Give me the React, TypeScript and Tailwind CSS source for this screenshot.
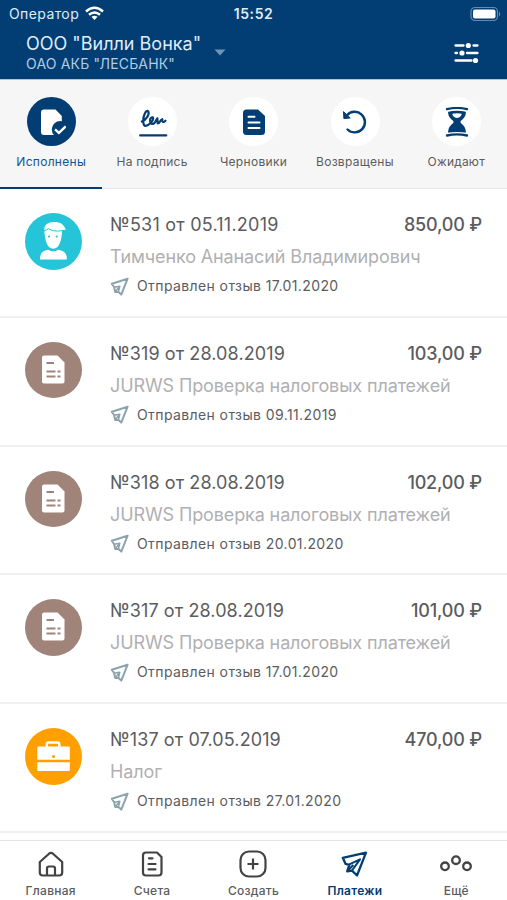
import type { ReactNode } from 'react';

function DoneIcon() {
  return (
    <svg width="30" height="30" viewBox="0 0 30 30">
      <path d="M8 2.500h11.500L25.800 9v19H8a3 3 0 0 1-3-3V5.500a3 3 0 0 1 3-3Z" fill="#fff" />
      <circle cx="24.300" cy="22.500" r="8.500" fill="#023e73" />
      <path d="m19 22.300 3.900 3.500 6.800-6.500" fill="none" stroke="#fff" strokeWidth="2.400" />
    </svg>
  );
}

function SignIcon() {
  return (
    <svg width="30" height="30" viewBox="0 0 30 30" fill="none" stroke="#023e73" strokeWidth="2.200" strokeLinecap="round" strokeLinejoin="round">
      <path d="M3.800 14.500c4-1.500 8.200-7 6.400-10.300C8 2.200 5.200 9 5.200 13.500c0 4 1 5.800 3 5.300 3-1 7-4.500 7-7.500 0-2-3.200-1-3.200 2 0 3.700 2.700 4.700 4.700 2.500l2.600-4.500.400 5.200c2.200 0 2.500-3.800 4.600-4.300-.5 2.500.7 4 3.200 1.500" />
      <path d="M2.200 28.400h26" strokeWidth="2.300" />
    </svg>
  );
}

function DraftIcon() {
  return (
    <svg width="30" height="30" viewBox="0 0 30 30">
      <path d="M7.500 2.500H19L26 9v15.500a3.500 3.500 0 0 1-3.500 3.500h-15A3.500 3.500 0 0 1 4 24.500V6a3.500 3.500 0 0 1 3.500-3.500Z" fill="#023e73" />
      <path d="M9.500 9.800h6M9.500 15.500h11M9.500 21.100h11" stroke="#fff" strokeWidth="2" strokeLinecap="round" />
    </svg>
  );
}

function ReturnIcon() {
  return (
    <svg width="30" height="30" viewBox="0 0 30 30" fill="none" stroke="#023e73" strokeWidth="2.400" strokeLinecap="round">
      <path d="M7 8.200A10.300 10.300 0 1 1 7.500 22.500" />
      <path d="m3.500 5 .4 6.600 6-.6Z" fill="#023e73" strokeWidth="1" />
    </svg>
  );
}

function HourglassIcon() {
  return (
    <svg width="30" height="30" viewBox="0 0 30 30">
      <path d="M6 3h18c0 5.500-1 7.500-4.800 10.500-1 1-1 2 0 3C23 19.500 24 22 24 27.500H6c0-5.500 1-8 4.800-11 1-1 1-2 0-3C7 10.500 6 8.500 6 3Z" fill="#023e73" />
      <path d="M10.300 6.800q4.700-1 9.400 0c-.2 2-1.200 2.700-2.700 3.700q-2 .8-4 0c-1.500-1-2.500-1.700-2.700-3.700Z" fill="#fff" />
      <path d="M5 3.900q10-2.500 20 0M5 26.900q10-1.800 20 0" fill="none" stroke="#fff" strokeWidth="2.200" />
      <path d="M5 2.200q10-2.500 20 0M5 28.500q10-2.100 20 0" fill="none" stroke="#023e73" strokeWidth="2.300" strokeLinecap="round" />
    </svg>
  );
}

function PlaneIcon() {
  return (
    <svg width="27" height="26" viewBox="0 0 27 26" fill="none" stroke="#023e73" strokeWidth="2.300" strokeLinejoin="round">
      <path d="M25 1.700 1.800 6.800 4.500 12.800 8.300 13.800 6.200 20.300 11 19.700 16 24.500Z" />
      <path d="M8.300 13.300 19 8.300 11 19.500M6.500 20 12.300 14" strokeWidth="2" />
    </svg>
  );
}

function SmallPlaneIcon() {
  return (
    <svg width="19" height="19" viewBox="0 0 19 19" fill="none" stroke="#8ba3ad" strokeWidth="2" strokeLinejoin="round">
      <path d="M17.600 1.700 1.800 6.800 4.200 10.300 5.200 15 8.500 15 11.300 17.600Z" />
      <path d="M4.200 10.300 9.800 9.300 8.500 14.500M5.200 14.800 9.500 9.800" strokeWidth="1.500" />
    </svg>
  );
}

function PersonIcon() {
  return (
    <svg width="56" height="56" viewBox="0 0 56 56" fill="#fff">
      <path d="M19.300 16.500C19 12 23 9 29 9c6-.2 10 2.200 11.700 7.500-1 1-2.200 1.300-3.700 1.300C36.800 27 34.500 35.700 28.300 35.700S19.700 27 19.300 16.500Z" />
      <path d="M19 17.500q2.700-.2 4.500-1.800 4 2.700 9 2.400l7.800-.8" fill="none" stroke="#26c4d9" strokeWidth="1" />
      <circle cx="24" cy="23.500" r="1.100" fill="#26c4d9" />
      <circle cx="31.800" cy="23.500" r="1.100" fill="#26c4d9" />
      <path d="M15 46.500c-.3-6 2.500-9 8.200-9.800q5 3.300 10.200 0c5.700.8 8.700 3.800 8.400 9.800Z" />
    </svg>
  );
}

function DocumentIcon() {
  return (
    <svg width="56" height="56" viewBox="0 0 56 56">
      <path d="M19 13.500h13.500l7 7V39.500a2 2 0 0 1-2 2H19a2 2 0 0 1-2-2v-24a2 2 0 0 1 2-2Z" fill="#fff" />
      <path d="M21.500 21h7.500M21.500 29.500h9M32.500 29.500h3M21.500 34.500h9M32.500 34.500h3" stroke="#a08379" strokeWidth="2.200" />
    </svg>
  );
}

function BriefcaseIcon() {
  return (
    <svg width="56" height="56" viewBox="0 0 56 56">
      <path d="M21.800 19v-2.500a2 2 0 0 1 2-2h8.500a2 2 0 0 1 2 2V19" fill="none" stroke="#fff" strokeWidth="2.500" />
      <path d="M13.300 18.500h30.500a1 1 0 0 1 1 1v12.300H12.300V19.500a1 1 0 0 1 1-1ZM12.300 34.200h32.500V42a1 1 0 0 1-1 1H13.300a1 1 0 0 1-1-1Z" fill="#fff" />
      <circle cx="28.500" cy="28.500" r="1.500" fill="#ffa000" />
    </svg>
  );
}

const tabs: { label: string; icon: ReactNode; spacing: string }[] = [
  { label: 'Исполнены', icon: <DoneIcon />, spacing: 'tracking-[0.3px]' },
  { label: 'На подпись', icon: <SignIcon />, spacing: 'tracking-[0.260px]' },
  { label: 'Черновики', icon: <DraftIcon />, spacing: 'tracking-[0.3px]' },
  { label: 'Возвращены', icon: <ReturnIcon />, spacing: 'tracking-[0.3px]' },
  { label: 'Ожидают', icon: <HourglassIcon />, spacing: 'tracking-[0.2px]' },
];

const payments = [
  { title: '№531 от 05.11.2019', amount: '850,00 ₽', name: 'Тимченко Ананасий Владимирович', date: '17.01.2020', kind: 'person', spacing: 'tracking-[0.230px]' },
  { title: '№319 от 28.08.2019', amount: '103,00 ₽', name: 'JURWS Проверка налоговых платежей', date: '09.11.2019', kind: 'doc', spacing: 'tracking-[0.1px]' },
  { title: '№318 от 28.08.2019', amount: '102,00 ₽', name: 'JURWS Проверка налоговых платежей', date: '20.01.2020', kind: 'doc', spacing: 'tracking-[0.1px]' },
  { title: '№317 от 28.08.2019', amount: '101,00 ₽', name: 'JURWS Проверка налоговых платежей', date: '17.01.2020', kind: 'doc', spacing: 'tracking-[0.1px]' },
  { title: '№137 от 07.05.2019', amount: '470,00 ₽', name: 'Налог', date: '27.01.2020', kind: 'case', spacing: 'tracking-[0.1px]' },
];

const avatars: Record<string, { bg: string; icon: ReactNode }> = {
  person: { bg: 'bg-[#26c4d9]', icon: <PersonIcon /> },
  doc: { bg: 'bg-[#a08379]', icon: <DocumentIcon /> },
  case: { bg: 'bg-[#ffa000]', icon: <BriefcaseIcon /> },
};

const nav: { label: string; icon: ReactNode }[] = [
  {
    label: 'Главная',
    icon: (
      <svg width="28" height="28" viewBox="0 0 28 28" fill="none" stroke="#414244" strokeWidth="2.200" strokeLinejoin="round">
        <path d="M2.800 12 12 3.700q2-1.700 4 0l9.200 8.300v10.500a3 3 0 0 1-3 3H5.800a3 3 0 0 1-3-3Z" />
        <path d="M10 25v-6.500a2 2 0 0 1 2-2h4a2 2 0 0 1 2 2V25" />
      </svg>
    ),
  },
  {
    label: 'Счета',
    icon: (
      <svg width="28" height="28" viewBox="0 0 28 28" fill="none" stroke="#414244" strokeWidth="2.200" strokeLinejoin="round" strokeLinecap="round">
        <path d="M8 2.500h11l4.500 4.500v15.500a3 3 0 0 1-3 3H8a3 3 0 0 1-3-3v-17a3 3 0 0 1 3-3Z" />
        <path d="M11 8.300h3.500M10.500 14h7M10.500 19.300h7" />
      </svg>
    ),
  },
  {
    label: 'Создать',
    icon: (
      <svg width="28" height="28" viewBox="0 0 28 28" fill="none" stroke="#414244" strokeWidth="2.200">
        <rect x="1.500" y="1.500" width="25" height="25" rx="8.500" />
        <path d="M14 8.500v11M8.500 14h11" />
      </svg>
    ),
  },
  { label: 'Платежи', icon: <PlaneIcon /> },
  {
    label: 'Ещё',
    icon: (
      <svg width="34" height="28" viewBox="0 0 34 28" fill="none" stroke="#414244" strokeWidth="2.300">
        <circle cx="6" cy="16.300" r="3.800" />
        <circle cx="17" cy="10.200" r="3.800" />
        <circle cx="28" cy="16.300" r="3.800" />
      </svg>
    ),
  },
];

export default function App() {
  return (
    <div className="flex h-[900px] w-[507px] flex-col overflow-hidden bg-white font-['Inter','Liberation_Sans',sans-serif] text-[#5b5c5e]">
      <header className="h-[79px] shrink-0 bg-[#023e73] text-[#dfecfa]">
        <div className="grid h-[27px] grid-cols-3 items-center pl-[9px] pr-[6px]">
          <div className="flex items-center gap-[6px] text-[14px] leading-none">
            <span className="tracking-[0.4px]">Оператор</span>
            <svg width="19" height="15" viewBox="0 0 19 15" fill="none" stroke="#fff" strokeWidth="2.500">
              <path d="M1 5.500q8.500-7.500 17 0M4 8.800q5.500-4.700 11 0" />
              <path d="m9.500 14-3-3.200q3-2.200 6 0Z" fill="#fff" stroke="none" />
            </svg>
          </div>
          <div className="-ml-[3px] text-center text-[14px] font-semibold leading-none tracking-[0.6px]">15:52</div>
          <svg className="justify-self-end" width="31" height="16" viewBox="0 0 31 16">
            <rect x="1" y="1.500" width="26.500" height="13" rx="4" fill="none" stroke="#668bad" strokeWidth="1.200" />
            <rect x="3" y="3.500" width="22.500" height="9" rx="2" fill="#fff" />
            <path d="M29 5.500q2.500 2.500 0 5Z" fill="#668bad" />
          </svg>
        </div>
        <div className="flex items-center pl-[26px] pr-[28px]">
          <div>
            <div className="pt-[6px] text-[18px] leading-[22px]">ООО "Вилли Вонка"</div>
            <div className="text-[14px] leading-[18px] tracking-[0.170px] text-[#b4cce3]">ОАО АКБ "ЛЕСБАНК"</div>
          </div>
          <svg className="ml-[13px] mt-[5px]" width="12" height="7" viewBox="0 0 12 7">
            <path d="M.5.500h11L6 6.500Z" fill="#7094b4" />
          </svg>
          <svg className="ml-auto mt-[6px]" width="25" height="22" viewBox="0 0 25 22" fill="none" stroke="#fff" strokeWidth="2.300" strokeLinecap="round">
            <path d="M1.500 3.500h8M19.500 3.500h4M1.500 11H3M13 11h10.500M1.500 18.500h16" />
            <g fill="#fff" stroke="none">
              <circle cx="14.300" cy="3.500" r="2.600" />
              <circle cx="8" cy="11" r="2.600" />
              <circle cx="21.500" cy="18.500" r="2.600" />
            </g>
          </svg>
        </div>
      </header>

      <div className="grid h-[110px] shrink-0 grid-cols-5 border-b border-t border-b-[#e5e6e7] border-t-[#a9c4dc] bg-[#f6f6f6]">
        {tabs.map((tab, i) => (
          <div
            key={tab.label}
            className={
              i === 0
                ? '-mb-px -mr-px flex flex-col items-center border-b-2 border-[#023e73] pt-[17px] text-[#17528a]'
                : 'flex flex-col items-center pt-[17px]'
            }
          >
            <div className={i === 0 ? 'flex size-[49px] items-center justify-center rounded-full bg-[#023e73]' : 'ml-px flex size-[49px] items-center justify-center rounded-full bg-white'}>
              {tab.icon}
            </div>
            <div className={`mt-[8px] whitespace-nowrap text-[12px] leading-4 ${tab.spacing}`}>{tab.label}</div>
          </div>
        ))}
      </div>

      <main className="h-[651px] shrink-0 overflow-hidden">
        {payments.map((p) => (
          <div key={p.title} className="flex h-[128.750px] border-b-2 border-[#f0f0f1] pl-[25px] pr-[25px] pt-6">
            <div className={`size-[56.500px] shrink-0 overflow-hidden rounded-full ${avatars[p.kind].bg}`}>{avatars[p.kind].icon}</div>
            <div className="ml-[28.500px] flex-1">
              <div className="flex justify-between whitespace-nowrap text-[18px] leading-6">
                <span className={p.spacing}>{p.title}</span>
                <span className="font-medium tracking-[-0.180px]">{p.amount}</span>
              </div>
              <div className="mt-2 whitespace-nowrap text-[18px] leading-6 tracking-[-0.120px] text-[#b0b0b2]">{p.name}</div>
              <div className="mt-[7px] flex items-center gap-[8px] whitespace-nowrap text-[14px] leading-5">
                <SmallPlaneIcon />
                <span className="tracking-[0.4px]">Отправлен отзыв {p.date}</span>
              </div>
            </div>
          </div>
        ))}
      </main>

      <nav className="grid h-[60px] shrink-0 grid-cols-5 border-t border-[#e3e3e4] pt-[9px]">
        {nav.map((item) => (
          <div key={item.label} className={item.label === 'Платежи' ? 'flex flex-col items-center text-[#023e73]' : 'flex flex-col items-center'}>
            <div className="flex h-7 items-center">{item.icon}</div>
            <div className={item.label === 'Платежи' ? 'mt-[5px] text-[12px] font-semibold leading-4 tracking-[0.250px]' : 'mt-[5px] text-[12px] font-medium leading-4 tracking-[0.250px]'}>{item.label}</div>
          </div>
        ))}
      </nav>
    </div>
  );
}
